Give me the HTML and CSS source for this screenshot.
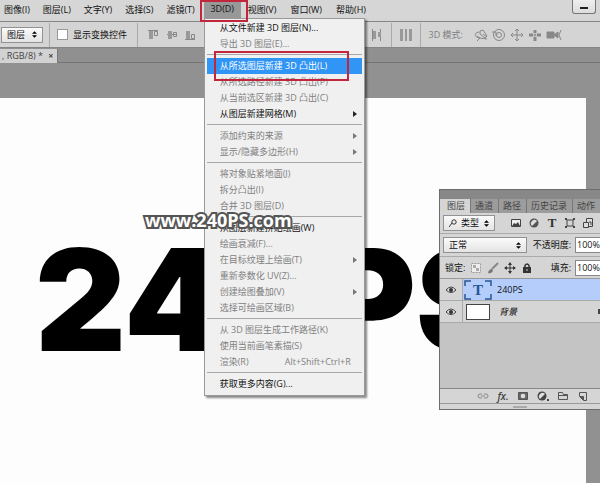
FILE: index.html
```html
<!DOCTYPE html>
<html lang="zh-CN">
<head>
<meta charset="utf-8">
<title>240PS</title>
<link rel="stylesheet" href="styles.css">
</head>
<body>
<nav class="menubar">
  <button>图像(I)</button><button>图层(L)</button><button>文字(Y)</button><button>选择(S)</button><button>滤镜(T)</button>
  <div class="menu-open">
    <button class="active">3D(D)</button>
    <div class="dropdown">
      <button>从文件新建 3D 图层(N)...</button>
      <button disabled>导出 3D 图层(E)...</button>
      <hr>
      <button class="selected">从所选图层新建 3D 凸出(L)</button>
      <button disabled>从所选路径新建 3D 凸出(P)</button>
      <button disabled>从当前选区新建 3D 凸出(C)</button>
      <button class="sub">从图层新建网格(M)</button>
      <hr>
      <button disabled class="sub">添加约束的来源</button>
      <button disabled class="sub">显示/隐藏多边形(H)</button>
      <hr>
      <button disabled>将对象贴紧地面(J)</button>
      <button disabled>拆分凸出(I)</button>
      <button disabled>合并 3D 图层(D)</button>
      <hr>
      <button>从图层新建拼贴绘画(W)</button>
      <button disabled>绘画衰减(F)...</button>
      <button disabled class="sub">在目标纹理上绘画(T)</button>
      <button disabled>重新参数化 UV(Z)...</button>
      <button disabled class="sub">创建绘图叠加(V)</button>
      <button disabled>选择可绘画区域(B)</button>
      <hr>
      <button disabled>从 3D 图层生成工作路径(K)</button>
      <button disabled>使用当前画笔素描(S)</button>
      <button disabled><span>渲染(R)</span><span class="shortcut">Alt+Shift+Ctrl+R</span></button>
      <hr>
      <button>获取更多内容(G)...</button>
      <span class="mark mark-item"></span>
    </div>
    <span class="mark mark-menu"></span>
  </div>
  <button>视图(V)</button><button>窗口(W)</button><button>帮助(H)</button>
  <button class="minimize" aria-label="最小化"></button>
</nav>

<div class="options">
  <span class="pick"><select aria-label="自动选择"><option>图层</option></select><svg viewBox="0 0 6 8"><path d="M0 3L3 0l3 3zM0 5l3 3 3-3z"/></svg></span>
  <i class="divider"></i>
  <label class="check"><input type="checkbox">显示变换控件</label>
  <i class="divider"></i>
  <svg class="align" viewBox="0 0 50 12" aria-hidden="true"><path d="M0 1.500h10M19 5.500h10M37 10.500h10" stroke="#888"/><path d="M1 2h4v8H1zM20 2h4v8h-4zM38 2h4v8h-4z" fill="#999"/><path d="M6.500 2.500h3v4h-3zM25.500 3.500h3v4h-3zM43.500 5.500h3v4h-3z" fill="none" stroke="#888"/></svg>
  <div class="right-tools">
    <svg class="dist" viewBox="0 0 12 12" aria-hidden="true"><path d="M1.500 0v12M9.500 0v12" stroke="#888"/><path d="M2 2h3v8H2zM7 3h3v5H7z" fill="#999"/></svg>
    <i class="divider"></i>
    <svg class="dist" viewBox="0 0 12 12" aria-hidden="true"><path d="M0 0h3v12H0zM5 0h2v12H5zM9 0h3v12H9z" fill="#999"/></svg>
    <i class="divider"></i>
    <span class="mode">3D 模式:</span>
    <svg class="modes" viewBox="0 0 90 14" aria-hidden="true" fill="none" stroke="#888">
      <path d="M5 4C-1 5 1 10 6 10l7 1M3 8l3 2-3 3M6 3l3-1 4 6-2 2-5-4zM9 6l4 3"/>
      <circle cx="25" cy="7" r="5.500"/><circle cx="25" cy="7" r="2.500"/><path d="M18 4h4v4"/>
      <path d="M43 1v12M37 7h12M41 3l2-2 2 2M41 11l2 2 2-2M39 5l-2 2 2 2M47 5l2 2-2 2"/>
      <path d="M61 2v3M55 7h4M63 7h4M61 9v4" stroke-width="3"/><circle cx="61" cy="7" r="1"/>
      <path d="M73 4h7v6h-7zM80 7l4-3v6z" fill="#888"/><path d="M87 2l-2 5 2 5"/>
    </svg>
  </div>
</div>

<div class="doc-tabs"><button class="doc-tab">, RGB/8) * <b>×</b></button></div>

<main class="workspace">
  <div class="canvas"><div class="art">240PS</div></div>
</main>

<div class="watermark">www.240PS.com</div>

<aside class="panel">
  <div class="panel-bar"></div>
  <div class="tabs"><button class="on">图层</button><button>通道</button><button>路径</button><button>历史记录</button><button>动作</button></div>
  <div class="row filter">
    <span class="pick kind"><svg class="lens" viewBox="0 0 8 8"><path d="M3 4L0 8" stroke="#333"/><circle cx="5" cy="3" r="2.200" fill="none" stroke="#333"/></svg><select aria-label="筛选"><option>类型</option></select><svg viewBox="0 0 6 8"><path d="M0 3L3 0l3 3zM0 5l3 3 3-3z"/></svg></span>
    <button aria-label="像素"><svg viewBox="0 0 12 12"><path d="M1.500 2.500h9v7h-9z" fill="#eee" stroke="#444"/><path d="M2 9l2-3 2 1 2-2 2 4z" fill="#444"/></svg></button>
    <button aria-label="调整"><svg viewBox="0 0 12 12"><circle cx="6" cy="6" r="4.500" fill="#555"/><path d="M4 9A3.500 3.500 0 0 1 9 4z" fill="#ddd"/></svg></button>
    <button class="type" aria-label="文字">T</button>
    <button aria-label="形状"><svg viewBox="0 0 12 12" fill="#444"><path d="M3 3h6v6H3z" fill="none" stroke="#444"/><path d="M1 1h2v2H1zM9 1h2v2H9zM1 9h2v2H1zM9 9h2v2H9z"/></svg></button>
    <button aria-label="智能对象"><svg viewBox="0 0 12 12" fill="#ddd" stroke="#444"><path d="M4.500 1.500h6v8h-6z"/><path d="M1.500 5.500h5v5h-5z"/><path d="M7 5h2v3" fill="none"/></svg></button>
  </div>
  <div class="row blend">
    <span class="pick"><select aria-label="混合模式"><option>正常</option></select><svg viewBox="0 0 6 8"><path d="M0 3L3 0l3 3zM0 5l3 3 3-3z"/></svg></span>
    <label>不透明度:<input type="text" value="100%"></label>
  </div>
  <div class="row lock">
    <span>锁定:</span>
    <button aria-label="透明像素"><svg viewBox="0 0 12 12"><path d="M1.500 1.500h9v9h-9z" fill="#eee" stroke="#999" stroke-dasharray="2 1"/><path d="M3 3h3v3H3zM6 6h3v3H6z" fill="#aaa"/></svg></button>
    <button aria-label="图像像素"><svg viewBox="0 0 12 12"><path d="M11 1L5 7" stroke="#888" stroke-width="2"/><path d="M1 11q1-4 4-4l1 2q-2 3-5 2z" fill="#777"/></svg></button>
    <button aria-label="位置"><svg viewBox="0 0 12 12"><path d="M6 1v10M1 6h10" stroke="#333"/><path d="M6 0l2 3H4zM6 12l2-3H4zM0 6l3-2v4zM12 6L9 4v4z" fill="#333"/></svg></button>
    <button aria-label="全部"><svg viewBox="0 0 12 12"><path d="M2 5h8v6H2z" fill="#333"/><path d="M4 5V3.500q2-3 4 0V5" fill="none" stroke="#333" stroke-width="1.500"/><path d="M6 7v2" stroke="#ccc"/></svg></button>
    <label>填充:<input type="text" value="100%"></label>
  </div>
  <div class="layers">
    <div class="layer current">
      <span class="eye"><svg viewBox="0 0 10 8"><path d="M0 4q5-6 10 0-5 5-10 0z" fill="#ddd" stroke="#444"/><circle cx="5" cy="4" r="2" fill="#333"/></svg></span>
      <span class="thumb text"><svg viewBox="0 0 28 20"><path d="M1 6V1h6M21 1h6v5M27 14v5h-6M7 19H1v-5" fill="none" stroke="#285591" stroke-width="1.500"/></svg><b>T</b></span>
      <span>240PS</span>
    </div>
    <div class="layer">
      <span class="eye"><svg viewBox="0 0 10 8"><path d="M0 4q5-6 10 0-5 5-10 0z" fill="#ddd" stroke="#444"/><circle cx="5" cy="4" r="2" fill="#333"/></svg></span>
      <span class="thumb plain"></span>
      <i>背景</i><span class="layer-lock"></span>
    </div>
  </div>
  <div class="panel-foot">
    <button aria-label="链接"><svg viewBox="0 0 12 12" fill="none" stroke="#888"><path d="M5 4H3a2 2 0 0 0 0 4h2M7 4h2a2 2 0 0 1 0 4H7M4 6h4"/></svg></button>
    <button class="fx">fx.</button>
    <button aria-label="蒙版"><svg viewBox="0 0 12 12"><path d="M1.500 2.500h9v7h-9z" fill="#666" stroke="#555"/><circle cx="6" cy="6" r="2.300" fill="#ddd"/></svg></button>
    <button aria-label="调整图层"><svg viewBox="0 0 12 12"><circle cx="5" cy="6" r="4.500" fill="#444"/><path d="M3 9A3.500 3.500 0 0 1 8 4z" fill="#ddd"/><path d="M10 9h2v2h-2z" fill="#444"/></svg></button>
    <button aria-label="新建组"><svg viewBox="0 0 12 12"><path d="M1.500 9.500v-7h4l1 2h4v5zM1 5.500h10" fill="none" stroke="#555"/></svg></button>
    <button aria-label="新建图层"><svg viewBox="0 0 12 12"><path d="M2.500 2.500h7v8h-3l-4-4zM6.500 10V6.500H3" fill="none" stroke="#555"/><path d="M3 7h3v3z" fill="#555"/></svg></button>
  </div>
  <div class="grip"></div>
</aside>
</body>
</html>
```
FILE: styles.css
```css
* { box-sizing: border-box; }
body {
  margin: 0;
  height: 100vh;
  overflow: hidden;
  display: flex;
  flex-direction: column;
  background: #919191;
  color: #111;
  font: 9px/16px "Open Sans", "Noto Sans CJK SC", sans-serif;
}
button, select, input {
  font: inherit;
  color: inherit;
  margin: 0;
  padding: 0;
  border: 0;
  background: none;
  border-radius: 0;
}
button { white-space: nowrap; }
select { appearance: none; }
svg { display: block; }

.menubar {
  display: flex;
  height: 21px;
  background: #d6d6d6;
  padding-right: 4px;
}
.menubar > button, .menu-open > button { padding: 0 6px; height: 20px; }
.menubar > button:first-child { padding-left: 4px; }
.menubar > button { margin-right: 1px; }
.menu-open { position: relative; margin: 0 1px 0 2px; }
.menu-open > .active { background: #989898; width: 37px; height: 18px; }
.menubar > .menu-open ~ button { padding: 0 7px 0 6px; }
.menubar > .menu-open ~ .minimize {
  margin: 0 0 0 auto;
  padding: 0;
  width: 24px;
  height: 14px;
  border: 1px solid #777;
  border-top: 0;
  border-radius: 0 0 3px 3px;
  background: linear-gradient(#eee, #ddd);
  display: grid;
  place-items: center;
}
.minimize::after { content: ""; width: 8px; height: 2px; margin-top: 3px; background: #222; }

.dropdown {
  position: absolute;
  z-index: 5;
  top: 18px;
  left: 0;
  width: 161px;
  padding: 1px 2px 3px;
  background: #f0f0f0;
  border: 1px solid #999;
  box-shadow: 2px 2px 2px #0007;
}
.dropdown button {
  display: flex;
  justify-content: space-between;
  width: 100%;
  height: 16px;
  line-height: 16px;
  padding: 0 11px 0 13px;
  text-align: left;
}
.dropdown button:disabled { color: #808080; }
.dropdown .selected { background: #3095f5; color: #fff; }
.dropdown .sub::after {
  content: "";
  align-self: center;
  margin-right: -6px;
  border: 3px solid transparent;
  border-left: 4px solid #222;
  border-right: 0;
}
.dropdown .sub:disabled::after { border-left-color: #777; }
.dropdown hr { margin: 2px 0 3px; border: 0; border-top: 1px solid #a8a8a8; }
.mark { position: absolute; border: 2px solid #c2263c; z-index: 6; pointer-events: none; }
.mark-menu { left: -4px; top: 0; width: 48px; height: 22px; }
.mark-item { left: 9px; top: 32px; width: 135px; height: 30px; }

.options {
  display: flex;
  align-items: center;
  height: 27px;
  flex: none;
  background: #d4d4d4;
  border-top: 1px solid #858585;
  border-bottom: 1px solid #858585;
}
.pick {
  display: flex;
  align-items: center;
  height: 16px;
  padding: 0 5px;
  background: linear-gradient(#fafafa, #e4e4e4);
  border: 1px solid #929292;
}
.pick select { flex: 1; min-width: 0; }
.pick svg { width: 5px; height: 7px; flex: none; }
.options .pick { width: 42px; margin-left: 1px; }
.divider { width: 1px; height: 24px; background: #aaa; margin: 0 7px 0 6px; }
.check { display: flex; align-items: center; gap: 5px; }
.check input { appearance: none; width: 11px; height: 11px; background: #fff; border: 1px solid #999; }
.options .check + .divider { margin: 0 10px 0 10px; }
.align { width: 50px; height: 12px; }
.right-tools { display: flex; align-items: center; margin-left: auto; margin-right: 36px; color: #808080; }
.dist { width: 12px; height: 12px; }
.right-tools .divider { margin: 0 8px; }
.mode { margin-right: 11px; }
.modes { width: 90px; height: 14px; }

.doc-tabs { flex: none; height: 15px; background: #909090; border-bottom: 1px solid #747474; }
.doc-tab { height: 14px; line-height: 14px; padding: 0 4px 0 2px; background: #d2d2d2; color: #444; border-right: 1px solid #777; }
.doc-tab b { margin-left: 3px; }

.workspace { flex: 1; min-height: 0; padding: 35px 14px 0 0; background: #919191; }
.canvas { height: 100%; overflow: hidden; background: #fdfdfd; }
.art {
  margin: 132px 0 0 35px;
  font: 900 141px/140px Inter, sans-serif;
  color: #000;
  white-space: nowrap;
}
.watermark {
  position: absolute;
  z-index: 8;
  left: 145px;
  top: 207px;
  font: 700 18px/26px "Open Sans", sans-serif;
  color: #fff;
  -webkit-text-stroke: 4px #555;
  paint-order: stroke fill;
}

.panel {
  position: absolute;
  z-index: 4;
  right: 0;
  top: 189px;
  width: 161px;
  background: #d5d5d5;
  border: 1px solid #6d6d6d;
  border-right: 0;
  overflow: hidden;
}
.panel-bar { height: 9px; background: #888; }
.tabs { display: flex; height: 14px; background: #9c9c9c; }
.tabs button { flex: none; height: 14px; line-height: 14px; padding: 0 5px 0 4px; color: #444; border-right: 1px solid #777; }
.tabs .on { background: #d5d5d5; padding: 0 5px 0 7px; }
.row { display: flex; align-items: center; height: 21px; padding-left: 3px; white-space: nowrap; }
.row button { width: 12px; height: 12px; flex: none; }
.row button svg { width: 12px; height: 12px; }
.filter { gap: 6px; border-bottom: 1px solid #aaa; }
.kind { width: 52px; margin-right: 9px; gap: 4px; }
.pick .lens { width: 8px; height: 8px; }
.row .type { font: 700 13px/12px "Liberation Serif", serif; color: #333; }
.blend { height: 23px; border-bottom: 1px solid #aaa; }
.blend .pick { width: 84px; flex: none; }
.row label { display: flex; align-items: center; gap: 4px; margin-left: auto; }
.row input { width: 25px; height: 16px; background: #fff; border: 1px solid #888; border-right: 0; padding-left: 1px; }
.lock { gap: 5px; padding-left: 5px; }
.layers { height: 111px; background: #c4c4c4; border-top: 1px solid #999; border-bottom: 1px solid #888; }
.layer { display: flex; align-items: center; height: 22px; background: #d5d5d5; border-bottom: 1px solid #aaa; }
.current { background: linear-gradient(90deg, #d5d5d5 23px, #b4cdfb 23px); }
.eye { width: 23px; height: 100%; display: grid; place-items: center; border-right: 1px solid #aaa; }
.eye svg { width: 10px; height: 8px; }
.thumb { width: 28px; height: 20px; margin: 0 5px 0 1px; flex: none; }
.text { position: relative; display: grid; place-items: center; font: 700 15px/18px "Liberation Serif", serif; color: #285591; }
.text svg { position: absolute; inset: 0; }
.plain { width: 24px; height: 16px; margin: 0 9px 0 3px; background: #fff; border: 1px solid #444; }
.layer-lock { margin-left: auto; width: 2px; height: 5px; background: #444; }
.panel-foot { display: flex; align-items: center; gap: 8px; height: 15px; padding-left: 37px; border-bottom: 1px solid #999; }
.panel-foot button { width: 12px; height: 12px; }
.panel-foot svg { width: 12px; height: 12px; }
.panel-foot .fx { font: italic 600 10px/12px "Open Sans", sans-serif; color: #444; }
.grip { height: 5px; display: grid; place-items: center; }
.grip::after { content: ""; width: 14px; height: 2px; background: #aaa; }
```
